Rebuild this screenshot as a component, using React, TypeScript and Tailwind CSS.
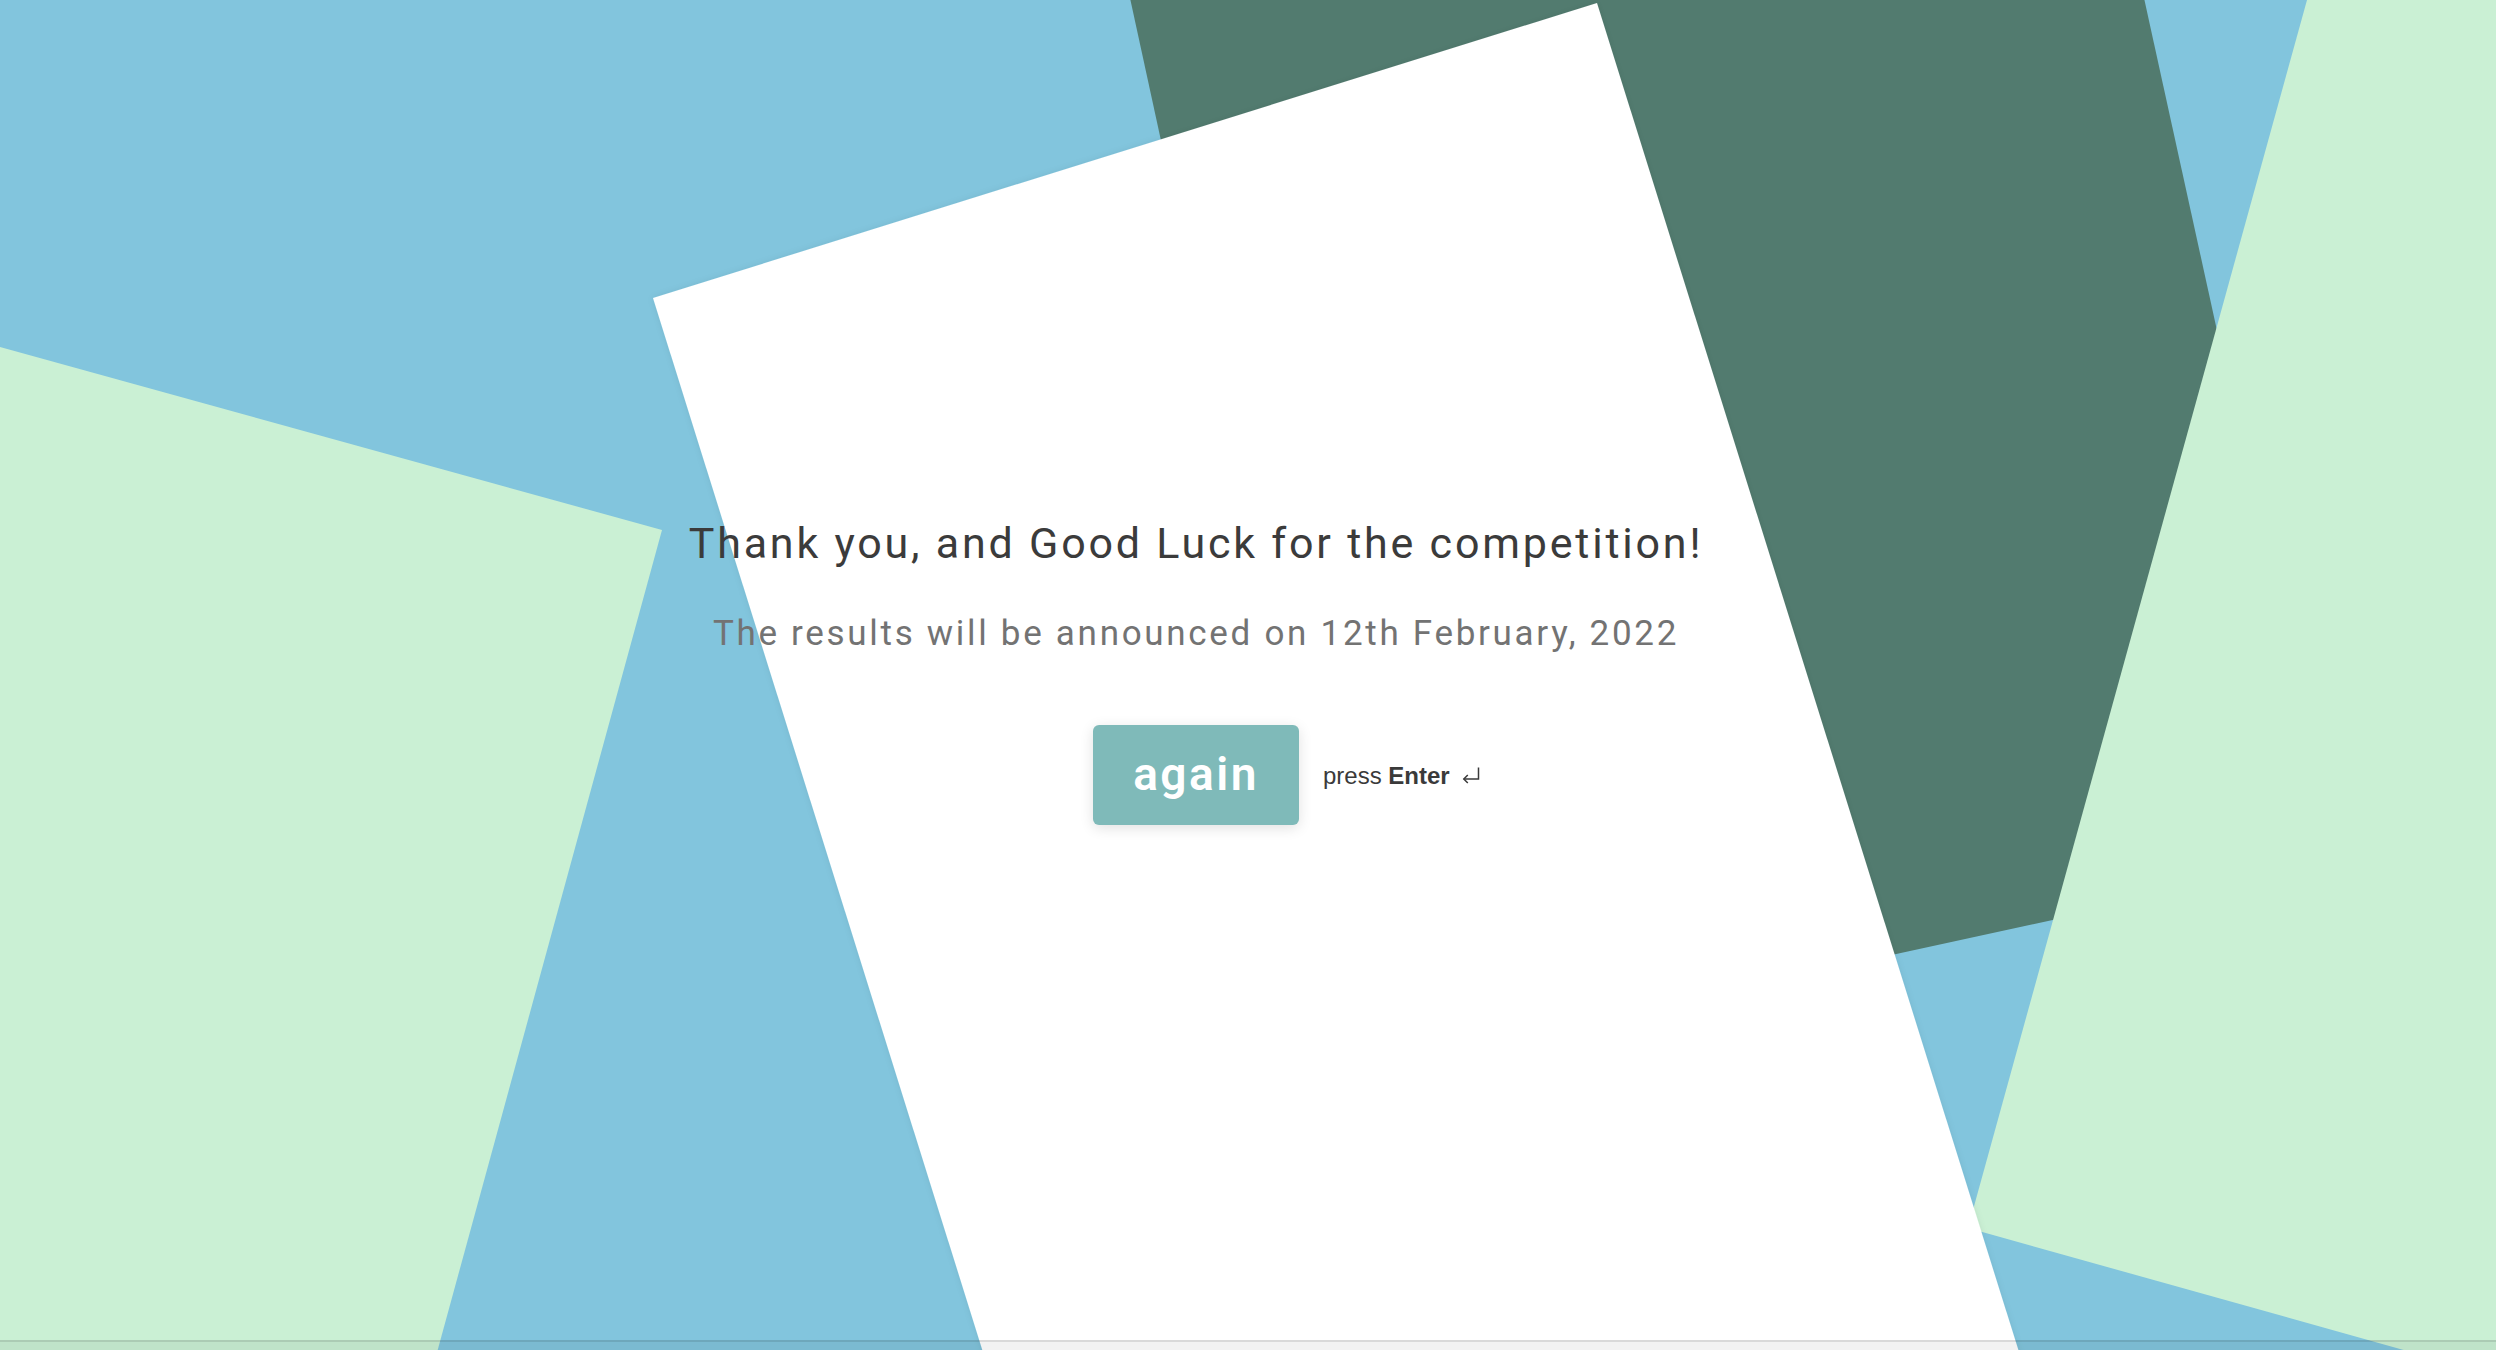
import React from 'react'

const Backdrop = () => (
  <svg
    className="absolute inset-0 h-full w-full"
    viewBox="0 0 2496 1350"
    preserveAspectRatio="none"
  >
    <defs>
      <filter id="cardShadow" x="-10%" y="-10%" width="120%" height="120%">
        <feDropShadow dx="0" dy="0" stdDeviation="3" floodColor="#000" floodOpacity="0.08" />
      </filter>
    </defs>
    {/* left mint sheet */}
    <polygon points="0,347 662,530 424,1400 0,1400" fill="#caf0d4" />
    {/* dark green sheet */}
    <polygon points="1130,-2 2144,-2 2333,859 1363,1070" fill="#527b6f" />
    {/* right mint sheet */}
    <polygon points="2307,0 2600,0 2600,1405 1968,1228" fill="#caf0d4" />
    {/* white card */}
    <polygon
      points="653,298 1597,3 2034,1400 998,1400"
      fill="#ffffff"
      filter="url(#cardShadow)"
    />
  </svg>
)

const EnterIcon = () => (
  <svg width="18" height="18" viewBox="0 0 18 18" fill="none" stroke="#3a3a3a" strokeWidth="1.5">
    <path d="M16.5 0.5 V12 H1.8" />
    <path d="M5.8 8 L1.8 12 L5.8 16" />
  </svg>
)

export default function App() {
  return (
    <div className="relative h-screen w-full overflow-hidden bg-[#82c5dd]">
      <Backdrop />

      <div className="relative flex flex-col items-center pr-[104px] pt-[517px] font-['Roboto',sans-serif]">
        <h1 className="whitespace-nowrap text-[43px] font-normal leading-[52px] tracking-[2.8px] text-[#3b3b3b]">
          Thank you, and Good Luck for the competition!
        </h1>
        <p className="mt-[44px] whitespace-nowrap text-[35px] leading-[42px] tracking-[2.7px] text-[#737373]">
          The results will be announced on 12th February, 2022
        </p>

        <div className="relative mt-[70px]">
          <button className="flex h-[100px] w-[206px] items-center justify-center rounded-[6px] bg-[#7fbab9] pb-[2px] text-[46px] font-semibold tracking-[2.5px] text-white shadow-[0_3px_14px_rgba(0,0,0,0.12)]">
            again
          </button>
          <span className="absolute left-full top-1/2 ml-6 flex -translate-y-1/2 items-center whitespace-nowrap pt-[2px] font-['Liberation_Sans',sans-serif] text-[24px] text-[#3a3a3a]">
            press&nbsp;<b className="font-bold">Enter</b>
            <span className="ml-3">
              <EnterIcon />
            </span>
          </span>
        </div>
      </div>

      <div className="absolute inset-x-0 bottom-0 h-[10px] border-t-2 border-black/10 bg-black/5" />
    </div>
  )
}
